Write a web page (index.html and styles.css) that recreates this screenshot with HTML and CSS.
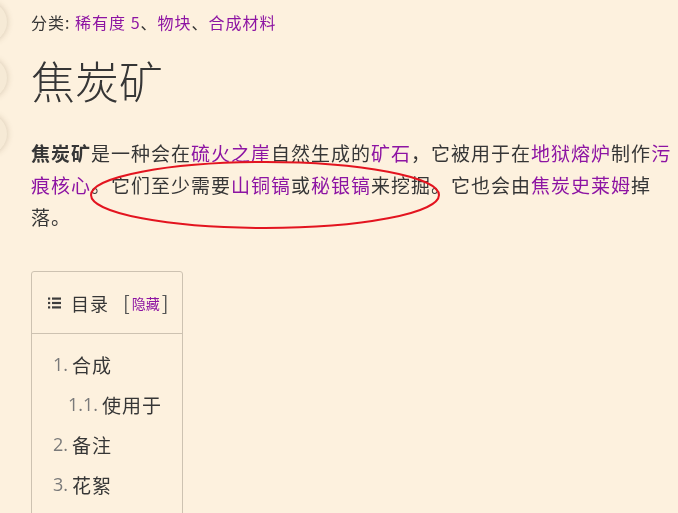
FILE: index.html
```html
<!DOCTYPE html>
<html lang="zh">
<head>
<meta charset="utf-8">
<title>焦炭矿</title>
<link rel="stylesheet" href="styles.css">
</head>
<body>
<div class="side-buttons">
  <span class="side-btn"></span>
  <span class="side-btn"></span>
  <span class="side-btn"></span>
</div>
<main class="page">
  <div class="cats">分类: <a href="#">稀有度 5</a>、<a href="#">物块</a>、<a href="#">合成材料</a></div>
  <h1 class="title">焦炭矿</h1>
  <p class="para"><b>焦炭矿</b>是一种会在<a href="#">硫火之崖</a>自然生成的<a href="#">矿石</a>，它被用于在<a href="#">地狱熔炉</a>制作<a href="#">污痕核心</a>。它们至少需要<a href="#">山铜镐</a>或<a href="#">秘银镐</a>来挖掘。它也会由<a href="#">焦炭史莱姆</a>掉落。</p>
  <nav class="toc">
    <div class="toc-head">
      <svg class="toc-icon" width="13" height="12" viewBox="0 0 13 12">
        <rect x="0" y="0.5" width="2.2" height="2.2" fill="#3c3c3c"/>
        <rect x="4" y="0.5" width="9" height="2.2" fill="#3c3c3c"/>
        <rect x="0" y="4.9" width="2.2" height="2.2" fill="#3c3c3c"/>
        <rect x="4" y="4.9" width="9" height="2.2" fill="#3c3c3c"/>
        <rect x="0" y="9.3" width="2.2" height="2.2" fill="#3c3c3c"/>
        <rect x="4" y="9.3" width="9" height="2.2" fill="#3c3c3c"/>
      </svg>
      <span class="toc-title">目录</span>
      <span class="toc-toggle"><span class="br">[</span><a href="#">隐藏</a><span class="br">]</span></span>
    </div>
    <ol class="toc-list">
      <li><span class="num">1.</span>合成</li>
      <li class="sub"><span class="num">1.1.</span>使用于</li>
      <li><span class="num">2.</span>备注</li>
      <li><span class="num">3.</span>花絮</li>
    </ol>
  </nav>
  <svg class="annot" width="360" height="80" viewBox="0 0 360 80">
    <ellipse cx="175" cy="36" rx="174" ry="33" fill="none" stroke="#e3141f" stroke-width="2"/>
  </svg>
</main>
</body>
</html>
```
FILE: styles.css
```css
html, body {
  margin: 0;
  padding: 0;
  background: #fdf1de;
}
body {
  font-family: "Noto Sans CJK SC", "Noto Sans", sans-serif;
  color: #363636;
  overflow: hidden;
}
a {
  color: #8d14a3;
  text-decoration: none;
}
.side-buttons {
  position: fixed;
  left: -33px;
  top: 2px;
  display: flex;
  flex-direction: column;
  gap: 16px;
}
.side-btn {
  display: block;
  width: 40px;
  height: 40px;
  border-radius: 50%;
  background: #f6ead6;
  box-shadow: 0 0 6px rgba(90, 70, 40, 0.25);
}
.page {
  position: relative;
  padding: 10px 0 0 31px;
  width: 642px;
}
.cats {
  font-size: 16px;
  line-height: 24px;
  letter-spacing: 1px;
}
.title {
  margin: 18px 0 0;
  font-size: 44px;
  line-height: 56px;
  font-weight: 300;
  color: #363636;
}
.para {
  margin: 29px 0 0;
  font-size: 19px;
  letter-spacing: 1px;
  line-height: 32px;
}
.para b {
  font-weight: 700;
}
.toc {
  margin-top: 38px;
  width: 150px;
  border: 1px solid #cdc2b1;
  border-radius: 3px;
  height: 260px;
}
.toc-head {
  display: flex;
  align-items: center;
  height: 61px;
  padding-left: 16px;
  border-bottom: 1px solid #cdc2b1;
}
.toc-icon {
  margin-right: 10px;
}
.toc-title {
  font-size: 18px;
  letter-spacing: 1px;
}
.toc-toggle {
  margin-left: 14px;
  display: flex;
  align-items: center;
  gap: 2px;
}
.toc-toggle .br {
  font-size: 20px;
  color: #555;
}
.toc-toggle a {
  font-size: 14px;
}
.toc-list {
  list-style: none;
  margin: 0;
  padding: 10px 0 0 21px;
  font-size: 19px;
  letter-spacing: 1px;
}
.toc-list li {
  display: flex;
  align-items: center;
  height: 40px;
  line-height: 1;
}
.toc-list .sub {
  padding-left: 15px;
}
.num {
  font-family: "Open Sans", sans-serif;
  font-size: 18px;
  color: #7a7a7a;
  letter-spacing: 0;
  margin-right: 4px;
}
.annot {
  position: absolute;
  left: 90px;
  top: 159px;
  pointer-events: none;
}
```
